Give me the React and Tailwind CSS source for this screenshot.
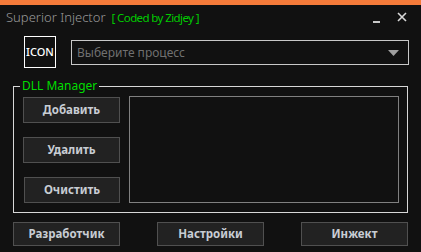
import React from 'react';

const Btn = ({ children, className = '' }) => (
  <button
    className={`flex items-center justify-center bg-[#222222] border border-[#505050] text-[#c8cdd4] text-[11.5px] font-bold ${className}`}
  >
    {children}
  </button>
);

export default function App() {
  return (
    <div
      className="w-[421px] h-[252px] bg-[#111111] flex flex-col overflow-hidden"
      style={{ fontFamily: '"Noto Sans", "Open Sans", sans-serif' }}
    >
      <div className="h-[5px] bg-[#f57b3a]" />

      {/* title bar */}
      <div className="h-[25px] flex items-center pl-[6px] pr-[14px]">
        <span className="text-[13px] font-light text-[#9a9a9a]">Superior Injector</span>
        <span className="ml-[6px] text-[11.5px] tracking-[-0.6px] text-[#00cc00]">[ Coded by Zidjey ]</span>
        <div className="ml-auto flex items-center gap-[17px]">
          <div className="w-[7px] h-[2px] bg-[#c8c8c8] mt-[9px]" />
          <svg width="10" height="10" viewBox="0 0 10 10" className="mb-[1px]">
            <path d="M1 1 L9 9 M9 1 L1 9" stroke="#d8d8d8" strokeWidth="1.6" />
          </svg>
        </div>
      </div>

      {/* process row */}
      <div className="flex items-start pl-[24px] pt-[6px]">
        <div className="w-[32px] h-[32px] border border-white flex items-center justify-center text-white text-[11px] font-medium">
          ICON
        </div>
        <div className="ml-[15px] mt-[4px] w-[338px] h-[25px] border border-[#c8c8c8] flex items-center pl-[5px] pr-[9px]">
          <span className="text-[12px] text-[#707070]">Выберите процесс</span>
          <svg width="11" height="6" viewBox="0 0 11 6" className="ml-auto">
            <path d="M0 0 L11 0 L5.5 6 Z" fill="#a0a0a0" />
          </svg>
        </div>
      </div>

      {/* group box */}
      <div className="relative ml-[13px] mt-[18px] w-[395px] h-[127px] border border-[#d8d8d8] flex pl-[9px] pt-[10px]">
        <span className="absolute -top-[10px] left-[6px] px-[2px] bg-[#111111] text-[12px] text-[#00dd00] leading-[18px]">
          DLL Manager
        </span>
        <div className="flex flex-col">
          <Btn className="w-[97px] h-[26px]">Добавить</Btn>
          <Btn className="w-[97px] h-[26px] mt-[14px]">Удалить</Btn>
          <Btn className="w-[96px] h-[26px] mt-[14px] ml-[1px]">Очистить</Btn>
        </div>
        <div className="ml-[9px] mt-[-1px] w-[270px] h-[107px] border border-[#808080]" />
      </div>

      {/* bottom buttons */}
      <div className="flex justify-between pl-[13px] pr-[13px] mt-[9px]">
        <Btn className="w-[107px] h-[24px]">Разработчик</Btn>
        <Btn className="w-[107px] h-[24px]">Настройки</Btn>
        <Btn className="w-[107px] h-[24px]">Инжект</Btn>
      </div>
    </div>
  );
}
